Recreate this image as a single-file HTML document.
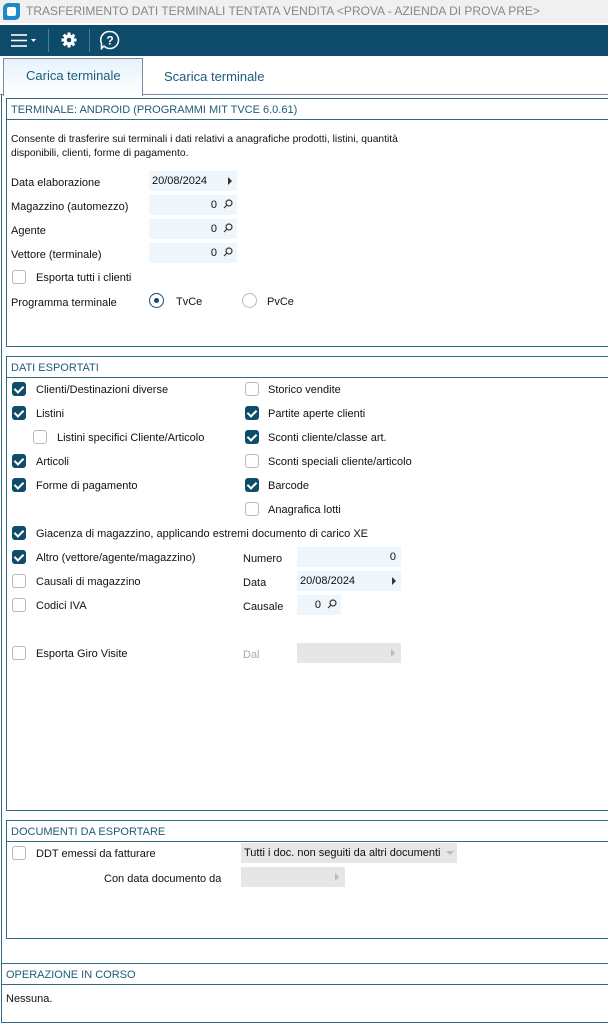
<!DOCTYPE html>
<html><head><meta charset="utf-8"><style>
*{box-sizing:border-box;margin:0;padding:0}
body{width:608px;height:1008px;overflow:hidden;background:#fff;font-family:"Liberation Sans",sans-serif;font-size:11px;color:#111;position:relative}
.a{position:absolute;white-space:nowrap;line-height:16px;margin-top:1px}
.title{position:absolute;left:0;top:0;width:608px;height:23px;background:#f0f0f0;color:#888;font-size:12px;line-height:23px;padding-left:26px}
.logo{position:absolute;left:3px;top:3px;width:17px;height:17px;background:#1e88c8;border-radius:5px 2px 5px 2px}
.logo:after{content:"";position:absolute;left:4px;top:4px;width:9px;height:9px;background:#fff;border-radius:2px}
.tb{position:absolute;left:0;top:25px;width:608px;height:31px;background:#0e4b6b}
.sep{position:absolute;top:4px;width:1px;height:23px;background:#4d7f99}
.box{position:absolute;border:1px solid #2f6b82}
.hd{position:absolute;left:0;right:0;top:0;height:21px;border-bottom:1px solid #2f6b82;color:#1d5b78;font-size:11px;line-height:22px;padding-left:4px}
.cb{position:absolute;width:14px;height:14px;border:1px solid #b9b9b9;border-radius:3px;background:#fff}
.cb.on{background:#0f4c6c;border-color:#0f4c6c}
.cb.on:after{content:"";position:absolute;left:3px;top:1px;width:4px;height:7px;border:solid #fff;border-width:0 2px 2px 0;transform:rotate(45deg)}
.fld{position:absolute;background:#eef6fc;height:20px;line-height:21px;text-align:right;padding-right:5px}
.dis{background:#e6e6e6}
.arr{position:absolute;width:0;height:0;border-left:4px solid #333;border-top:4px solid transparent;border-bottom:4px solid transparent}
</style></head><body>
<div class="title"><div class="logo"></div>TRASFERIMENTO DATI TERMINALI TENTATA VENDITA &lt;PROVA - AZIENDA DI PROVA PRE&gt;</div>
<div class="tb">
 <svg style="position:absolute;left:10px;top:7px" width="30" height="18"><g stroke="#fff" stroke-width="1.6"><line x1="1" y1="3" x2="17" y2="3"/><line x1="1" y1="8.5" x2="17" y2="8.5"/><line x1="1" y1="14" x2="17" y2="14"/></g><path d="M21 7h5l-2.5 3z" fill="#fff"/></svg>
 <div class="sep" style="left:48px"></div>
 <svg style="position:absolute;left:60px;top:6px" width="18" height="18" viewBox="0 0 18 18"><g fill="#fff"><circle cx="9" cy="9" r="5.5"/><g stroke="#fff" stroke-width="3"><line x1="9" y1="1.5" x2="9" y2="16.5"/><line x1="1.5" y1="9" x2="16.5" y2="9"/><line x1="3.7" y1="3.7" x2="14.3" y2="14.3"/><line x1="14.3" y1="3.7" x2="3.7" y2="14.3"/></g></g><circle cx="9" cy="9" r="2.3" fill="#0e4b6b"/></svg>
 <div class="sep" style="left:89px"></div>
 <svg style="position:absolute;left:100px;top:5px" width="20" height="20" viewBox="0 0 20 20"><path d="M10 1.5a8.5 8.5 0 1 1 -6 14.5l-2.5 2.5v-5a8.5 8.5 0 0 1 8.5 -12z" fill="none" stroke="#fff" stroke-width="1.5"/><text x="10" y="14.5" font-size="12" fill="#fff" text-anchor="middle" font-family="Liberation Sans" font-weight="bold">?</text></svg>
</div>
<div style="position:absolute;left:3px;top:58px;width:140px;height:38px;border:1px solid #7a8aa0;border-bottom:none;background:linear-gradient(#e6f3fb,#fff);z-index:2"></div>
<div class="a" style="left:26px;top:67px;font-size:13px;color:#1d5b78;z-index:3">Carica terminale</div>
<div class="a" style="left:164px;top:68px;font-size:13px;color:#1d5b78">Scarica terminale</div>
<div style="position:absolute;left:0;top:94px;width:608px;height:1px;background:#7a8aa0"></div>
<div style="position:absolute;left:1px;top:94px;width:1px;height:870px;background:#2f6b82"></div>

<div class="box" style="left:6px;top:98px;width:604px;height:249px"><div class="hd">TERMINALE: ANDROID (PROGRAMMI MIT TVCE 6.0.61)</div></div>
<div class="a" style="left:11px;top:131px;font-size:10.3px">Consente di trasferire sui terminali i dati relativi a anagrafiche prodotti, listini, quantità</div>
<div class="a" style="left:11px;top:145px;font-size:10.3px">disponibili, clienti, forme di pagamento.</div>
<div class="a" style="left:11px;top:174px">Data elaborazione</div>
<div class="fld" style="left:149px;top:171px;width:88px;text-align:left;padding-left:3px">20/08/2024</div><div class="arr" style="left:228px;top:177px"></div>
<div class="a" style="left:11px;top:198px">Magazzino (automezzo)</div>
<div class="fld" style="left:149px;top:195px;width:88px;padding-right:20px">0</div>
<div class="a" style="left:11px;top:222px">Agente</div>
<div class="fld" style="left:149px;top:219px;width:88px;padding-right:20px">0</div>
<div class="a" style="left:11px;top:246px">Vettore (terminale)</div>
<div class="fld" style="left:149px;top:243px;width:88px;padding-right:20px">0</div>
<svg style="position:absolute;left:223px;top:199px" width="10" height="60"><g fill="none" stroke="#333" stroke-width="1.2"><circle cx="6" cy="4" r="3"/><line x1="4" y1="6" x2="1" y2="9"/><circle cx="6" cy="28" r="3"/><line x1="4" y1="30" x2="1" y2="33"/><circle cx="6" cy="52" r="3"/><line x1="4" y1="54" x2="1" y2="57"/></g></svg>
<div class="cb" style="left:12px;top:270px"></div><div class="a" style="left:36px;top:269px">Esporta tutti i clienti</div>
<div class="a" style="left:11px;top:294px">Programma terminale</div>
<div style="position:absolute;left:149px;top:293px;width:15px;height:15px;border:1px solid #0f4c6c;border-radius:50%"><div style="position:absolute;left:4px;top:4px;width:5px;height:5px;border-radius:50%;background:#0f4c6c"></div></div>
<div class="a" style="left:176px;top:293px">TvCe</div>
<div style="position:absolute;left:242px;top:293px;width:15px;height:15px;border:1px solid #bbb;border-radius:50%"></div>
<div class="a" style="left:267px;top:293px">PvCe</div>

<div class="box" style="left:6px;top:356px;width:604px;height:455px"><div class="hd">DATI ESPORTATI</div></div>
<div class="cb on" style="left:12px;top:382px"></div><div class="a" style="left:36px;top:381px">Clienti/Destinazioni diverse</div>
<div class="cb on" style="left:12px;top:406px"></div><div class="a" style="left:36px;top:405px">Listini</div>
<div class="cb" style="left:33px;top:430px"></div><div class="a" style="left:57px;top:429px">Listini specifici Cliente/Articolo</div>
<div class="cb on" style="left:12px;top:454px"></div><div class="a" style="left:36px;top:453px">Articoli</div>
<div class="cb on" style="left:12px;top:478px"></div><div class="a" style="left:36px;top:477px">Forme di pagamento</div>
<div class="cb on" style="left:12px;top:526px"></div><div class="a" style="left:36px;top:525px">Giacenza di magazzino, applicando estremi documento di carico XE</div>
<div class="cb on" style="left:12px;top:550px"></div><div class="a" style="left:36px;top:549px">Altro (vettore/agente/magazzino)</div>
<div class="cb" style="left:12px;top:574px"></div><div class="a" style="left:36px;top:573px">Causali di magazzino</div>
<div class="cb" style="left:12px;top:598px"></div><div class="a" style="left:36px;top:597px">Codici IVA</div>
<div class="cb" style="left:12px;top:646px"></div><div class="a" style="left:36px;top:645px">Esporta Giro Visite</div>

<div class="cb" style="left:245px;top:382px"></div><div class="a" style="left:268px;top:381px">Storico vendite</div>
<div class="cb on" style="left:245px;top:406px"></div><div class="a" style="left:268px;top:405px">Partite aperte clienti</div>
<div class="cb on" style="left:245px;top:430px"></div><div class="a" style="left:268px;top:429px">Sconti cliente/classe art.</div>
<div class="cb" style="left:245px;top:454px"></div><div class="a" style="left:268px;top:453px">Sconti speciali cliente/articolo</div>
<div class="cb on" style="left:245px;top:478px"></div><div class="a" style="left:268px;top:477px">Barcode</div>
<div class="cb" style="left:245px;top:502px"></div><div class="a" style="left:268px;top:501px">Anagrafica lotti</div>

<div class="a" style="left:243px;top:550px">Numero</div>
<div class="fld" style="left:297px;top:547px;width:104px">0</div>
<div class="a" style="left:243px;top:574px">Data</div>
<div class="fld" style="left:297px;top:571px;width:104px;text-align:left;padding-left:3px">20/08/2024</div><div class="arr" style="left:392px;top:577px"></div>
<div class="a" style="left:243px;top:598px">Causale</div>
<div class="fld" style="left:297px;top:595px;width:44px;padding-right:20px">0</div>
<svg style="position:absolute;left:327px;top:599px" width="10" height="10"><g fill="none" stroke="#333" stroke-width="1.2"><circle cx="6" cy="4" r="3"/><line x1="4" y1="6" x2="1" y2="9"/></g></svg>
<div class="a" style="left:243px;top:646px;color:#aaa">Dal</div>
<div class="fld dis" style="left:297px;top:643px;width:104px"></div><div class="arr" style="left:391px;top:649px;border-left-color:#bbb"></div>

<div class="box" style="left:6px;top:820px;width:604px;height:119px"><div class="hd">DOCUMENTI DA ESPORTARE</div></div>
<div class="cb" style="left:12px;top:846px"></div><div class="a" style="left:36px;top:845px">DDT emessi da fatturare</div>
<div class="fld dis" style="left:241px;top:843px;width:216px;text-align:left;padding-left:3px;color:#111">Tutti i doc. non seguiti da altri documenti</div>
<div style="position:absolute;left:446px;top:851px;border-top:4px solid #bbb;border-left:4px solid transparent;border-right:4px solid transparent"></div>
<div class="a" style="left:104px;top:870px">Con data documento da</div>
<div class="fld dis" style="left:241px;top:867px;width:104px"></div><div class="arr" style="left:335px;top:873px;border-left-color:#bbb"></div>

<div class="box" style="left:1px;top:963px;width:609px;height:60px"><div class="hd" style="color:#1d5b78">OPERAZIONE IN CORSO</div></div>
<div class="a" style="left:6px;top:990px">Nessuna.</div>
</body></html>
